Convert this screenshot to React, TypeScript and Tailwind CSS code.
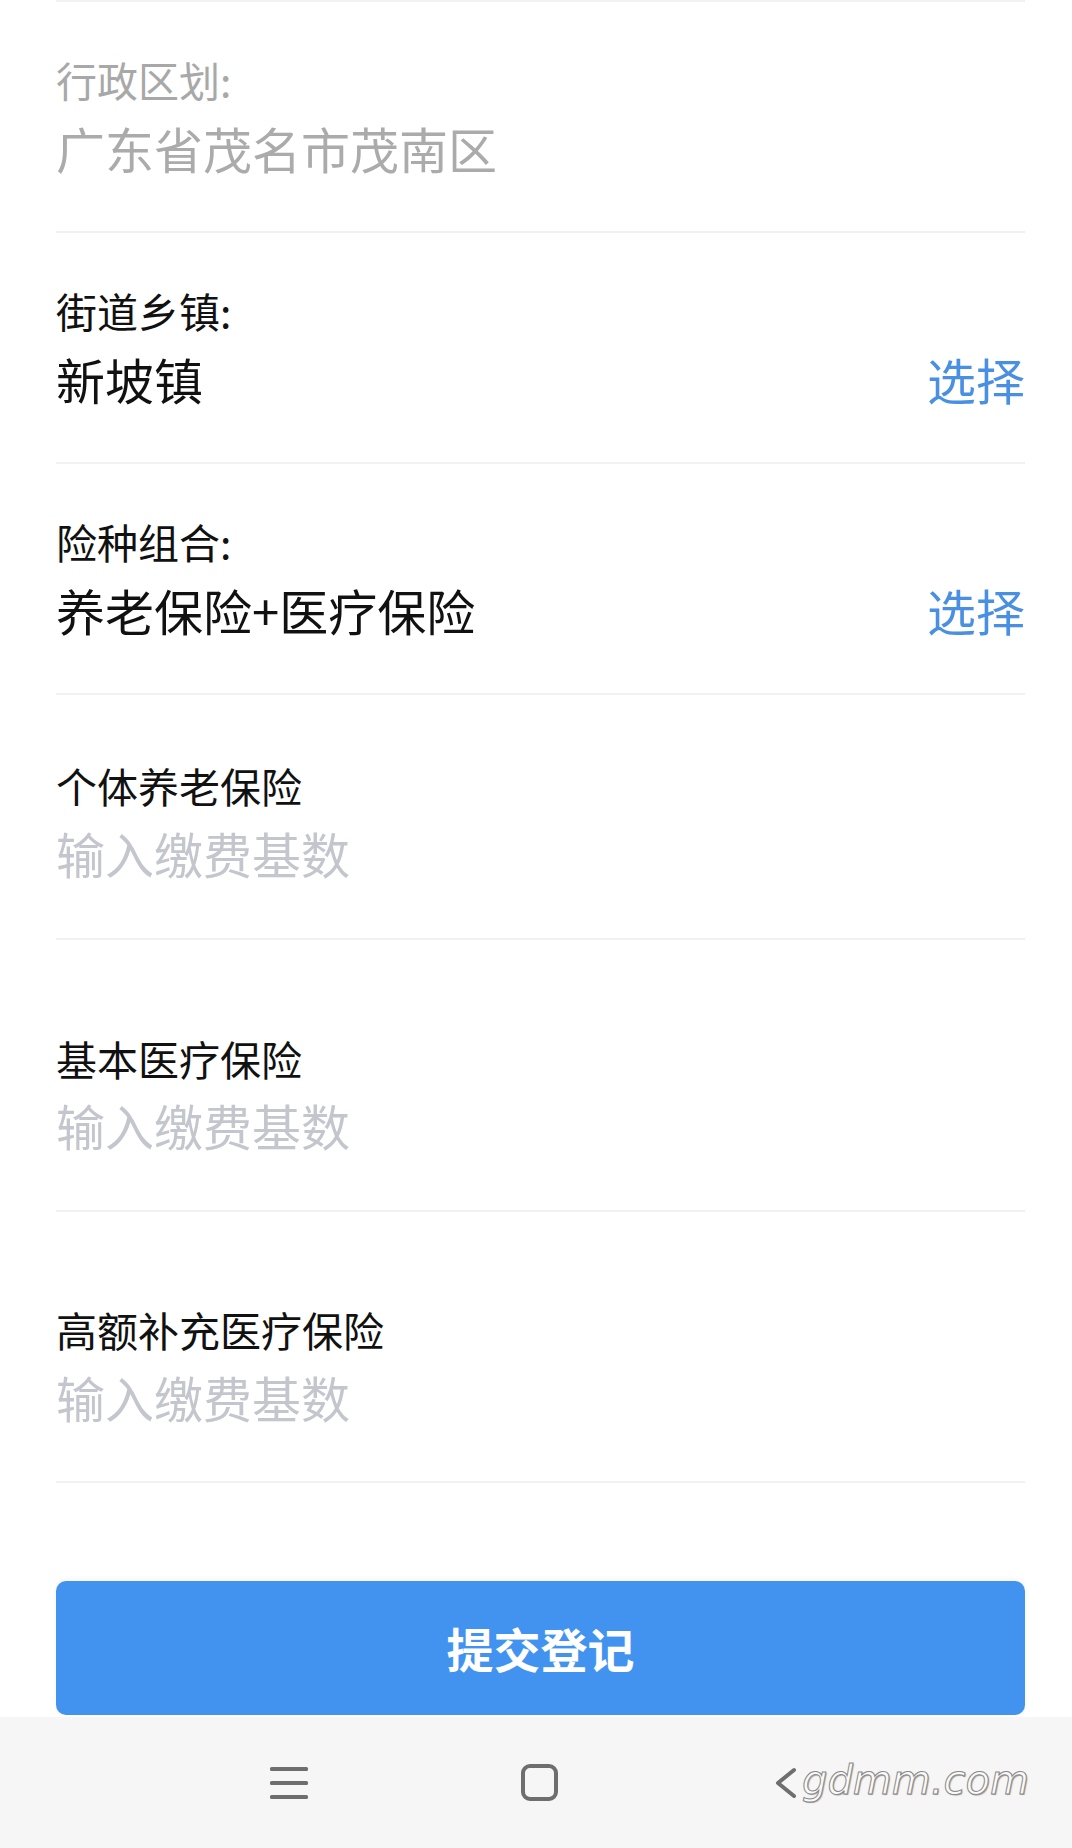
import React from "react";

const cjk = '"Noto Sans CJK SC", "Noto Sans", sans-serif';

type Row = {
  label: string;
  value: string;
  kind: "disabled" | "select" | "input";
  pt: string;
  gap: string;
  pb: string;
};

const rows: Row[] = [
  { label: "行政区划:", value: "广东省茂名市茂南区", kind: "disabled", pt: "pt-[52px]", gap: "mt-[14px]", pb: "pb-[53px]" },
  { label: "街道乡镇:", value: "新坡镇", kind: "select", pt: "pt-[52px]", gap: "mt-[14px]", pb: "pb-[53px]" },
  { label: "险种组合:", value: "养老保险+医疗保险", kind: "select", pt: "pt-[52px]", gap: "mt-[14px]", pb: "pb-[53px]" },
  { label: "个体养老保险", value: "输入缴费基数", kind: "input", pt: "pt-[65px]", gap: "mt-[13px]", pb: "pb-[55px]" },
  { label: "基本医疗保险", value: "输入缴费基数", kind: "input", pt: "pt-[93px]", gap: "mt-[12px]", pb: "pb-[55px]" },
  { label: "高额补充医疗保险", value: "输入缴费基数", kind: "input", pt: "pt-[92px]", gap: "mt-[13px]", pb: "pb-[54px]" },
];

function FormRow({ row, last }: { row: Row; last: boolean }) {
  const labelColor = row.kind === "disabled" ? "text-[#a8a8a8]" : "text-[#111111]";
  const valueColor =
    row.kind === "disabled" ? "text-[#ababab]" : row.kind === "input" ? "text-[#c3c6cc]" : "text-[#111111]";
  return (
    <div className={`border-t-2 border-[#f1f1f1] ${last ? "border-b-2" : ""} ${row.pt} ${row.pb}`}>
      <div className={`text-[41px] leading-[50px] ${labelColor}`}>{row.label}</div>
      <div className={`${row.gap} flex items-center justify-between`}>
        <div className={`text-[49px] leading-[60px] ${valueColor}`}>{row.value}</div>
        {row.kind === "select" && (
          <div className="text-[49px] leading-[60px] text-[#4a90e2]">选择</div>
        )}
      </div>
    </div>
  );
}

export default function App() {
  return (
    <div className="w-[1072px] h-[1848px] bg-white flex flex-col overflow-hidden" style={{ fontFamily: cjk }}>
      <div className="flex-1 flex flex-col ml-[56px] mr-[47px]">
        {rows.map((r, i) => (
          <FormRow key={i} row={r} last={i === rows.length - 1} />
        ))}
        <button className="mt-[98px] h-[134px] w-full rounded-[10px] bg-[#4293ef] text-white text-[47px] font-bold flex items-center justify-center shadow-[0_-2px_6px_rgba(0,0,0,0.04)]">
          提交登记
        </button>
      </div>
      <div className="relative h-[131px] bg-[#f6f6f6] flex items-center justify-center pl-[6px]">
        <div className="w-[250px] flex justify-center">
          <svg width="40" height="36" viewBox="0 0 40 36">
            <rect x="1" y="2" width="38" height="4" rx="1.5" fill="#6e6e6e" />
            <rect x="1" y="16" width="38" height="4" rx="1.5" fill="#6e6e6e" />
            <rect x="1" y="30" width="38" height="4" rx="1.5" fill="#6e6e6e" />
          </svg>
        </div>
        <div className="w-[250px] flex justify-center">
          <div className="w-[37px] h-[37px] rounded-[9px] border-[4px] border-[#6e6e6e]" />
        </div>
        <div className="w-[250px] flex justify-center">
          <svg width="26" height="32" viewBox="0 0 26 32" className="-ml-[6px]">
            <path d="M21 3 L5 16 L21 29" fill="none" stroke="#6e6e6e" strokeWidth="4" strokeLinecap="round" strokeLinejoin="round" />
          </svg>
        </div>
        <div
          className="absolute left-[802px] top-[38px] text-[40px] italic text-[#fafafa] leading-[50px] [-webkit-text-stroke:1px_#8a8a8a] [text-shadow:1px_1px_1px_#a0a0a0]"
          style={{ fontFamily: '"DejaVu Sans", sans-serif' }}
        >
          gdmm.com
        </div>
      </div>
    </div>
  );
}
